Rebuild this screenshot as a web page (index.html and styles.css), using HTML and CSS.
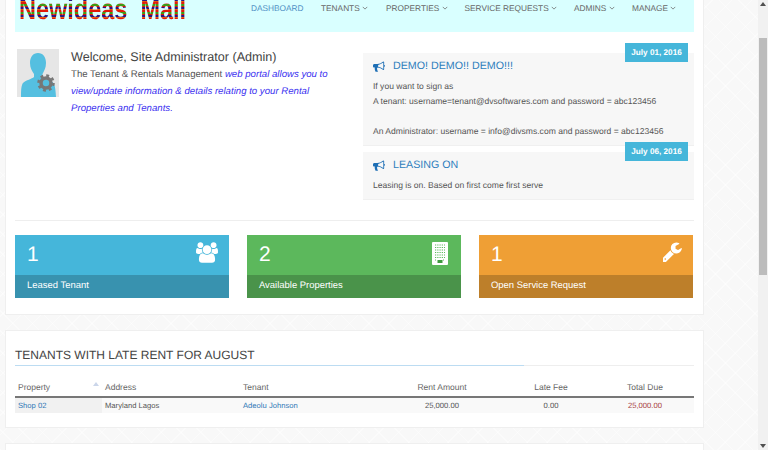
FILE: index.html
```html
<!DOCTYPE html>
<html lang="en">
<head>
<meta charset="utf-8">
<title>Newideas Mall</title>
<link rel="stylesheet" href="styles.css">
</head>
<body>
<svg class="defs" width="0" height="0" aria-hidden="true">
  <defs>
    <symbol id="bullhorn" viewBox="0 0 1792 1792"><path d="M1664 736q53 0 90.5 37.5t37.5 90.5-37.5 90.5-90.5 37.5v384q0 52-38 90t-90 38q-417-347-812-380-58 19-91 66t-31 100.5 40 92.5q-20 33-23 65.5t6 58 33.5 55 48 50 61.5 50.5q-29 58-111.5 83t-168.5 11.5-132-55.5q-7-23-29.5-87.5t-32-94.5-23-89-15-101 3.5-98.5 22-110.5h-122q-66 0-113-47t-47-113v-192q0-66 47-113t113-47h480q435 0 896-384 52 0 90 38t38 90v384zm-128 604v-954q-394 302-768 343v270q377 42 768 341z"/></symbol>
    <symbol id="chev" viewBox="0 0 8 5"><path d="M1 1l3 3 3-3" fill="none" stroke="currentColor" stroke-width="1"/></symbol>
  </defs>
</svg>
<div class="window">
  <main class="page">
    <section class="panel panel-top">
      <header class="topbar">
        <div class="logo">Newideas  Mall</div>
        <nav class="nav">
          <a class="nav-item nav-active nav-dash">DASHBOARD</a>
          <a class="nav-item nav-tenants">TENANTS <svg class="chev"><use href="#chev"/></svg></a>
          <a class="nav-item nav-props">PROPERTIES <svg class="chev"><use href="#chev"/></svg></a>
          <a class="nav-item nav-service">SERVICE REQUESTS <svg class="chev"><use href="#chev"/></svg></a>
          <a class="nav-item nav-admins">ADMINS <svg class="chev"><use href="#chev"/></svg></a>
          <a class="nav-item">MANAGE <svg class="chev"><use href="#chev"/></svg></a>
        </nav>
      </header>

      <div class="intro">
        <div class="welcome">
          <svg class="avatar" viewBox="0 0 42 48" aria-hidden="true">
            <rect width="42" height="48" fill="#e6e6e6"/>
            <path d="M21 4c5 0 8 4 8 10 0 5-2 8-3.500 11v3c2 2 7 3 10 5 2 2 3 5 3.500 15H4c0-8 .5-12 2-14 3-3 9-4 11-6v-3c-2-3-4-6-4-11 0-6 3-10 8-10z" fill="#55bfe0"/>
            <circle cx="29" cy="34" r="5" fill="none" stroke="#777" stroke-width="3.500"/>
            <circle cx="29" cy="34" r="7.500" fill="none" stroke="#777" stroke-width="2.500" stroke-dasharray="2.900 2.990"/>
          </svg>
          <div class="welcome-text">
            <h1 class="welcome-title">Welcome, Site Administrator (Admin)</h1>
            <p class="welcome-copy">The Tenant &amp; Rentals Management <em class="accent">web portal allows you to view/update information &amp; details relating to your Rental Properties and Tenants.</em></p>
          </div>
        </div>
        <div class="notices">
          <article class="notice">
            <span class="badge">July 01, 2016</span>
            <h2 class="notice-title"><svg class="horn"><use href="#bullhorn"/></svg>DEMO! DEMO!! DEMO!!!</h2>
            <p class="notice-text">If you want to sign as<br>A tenant: username=tenant@dvsoftwares.com and password = abc123456<br><br>An Administrator: username = info@divsms.com and password = abc123456</p>
          </article>
          <article class="notice">
            <span class="badge">July 06, 2016</span>
            <h2 class="notice-title"><svg class="horn"><use href="#bullhorn"/></svg>LEASING ON</h2>
            <p class="notice-text">Leasing is on. Based on first come first serve</p>
          </article>
        </div>
      </div>

      <hr class="rule">

      <div class="stats">
        <div class="stat stat-blue">
          <div class="stat-main"><span class="stat-num">1</span>
            <svg class="stat-icon icon-users" viewBox="0 0 1920 1792" fill="#fff"><path d="M593 896q-162 5-265 128h-134q-82 0-138-40.500t-56-118.500q0-353 124-353 6 0 43.500 21t97.500 42.500 119 21.500q67 0 133-23-5 37-5 66 0 139 81 256zm1071 637q0 120-73 189.500t-194 69.500h-874q-121 0-194-69.500t-73-189.500q0-53 3.500-103.500t14-109 26.500-108.500 43-97.500 62-81 85.500-53.500 111.500-20q10 0 43 21.500t73 48 107 48 135 21.500 135-21.500 107-48 73-48 43-21.500q61 0 111.500 20t85.500 53.500 62 81 43 97.500 26.500 108.500 14 109 3.500 103.500zm-1024-1277q0 106-75 181t-181 75-181-75-75-181 75-181 181-75 181 75 75 181zm704 384q0 159-112.500 271.500t-271.500 112.500-271.500-112.500-112.500-271.500 112.500-271.500 271.500-112.500 271.500 112.500 112.500 271.500zm576 225q0 78-56 118.500t-138 40.500h-134q-103-123-265-128 81-117 81-256 0-29-5-66 66 23 133 23 59 0 119-21.500t97.500-42.500 43.500-21q124 0 124 353zm-128-609q0 106-75 181t-181 75-181-75-75-181 75-181 181-75 181 75 75 181z"/></svg>
          </div>
          <div class="stat-foot">Leased Tenant</div>
        </div>
        <div class="stat stat-green">
          <div class="stat-main"><span class="stat-num">2</span>
            <svg class="stat-icon icon-building" viewBox="0 0 16 23">
              <rect width="16" height="23" rx="1" fill="#fff"/>
              <path d="M3 3h10M3 5.500h10M3 8h10M3 10.500h10M3 13h10M3 15.500h10" stroke="#5cb85c" stroke-width="1.100" stroke-dasharray="1.200 1.050"/>
              <path d="M3 18h2M11 18h2" stroke="#5cb85c" stroke-width="1" stroke-dasharray="1 1"/>
              <rect x="5.500" y="18" width="5" height="3" fill="#3f9a3f"/>
            </svg>
          </div>
          <div class="stat-foot">Available Properties</div>
        </div>
        <div class="stat stat-orange">
          <div class="stat-main"><span class="stat-num">1</span>
            <svg class="stat-icon icon-wrench" viewBox="200 130 1540 1540" fill="#fff"><path d="M448 1472q0-26-19-45t-45-19-45 19-19 45 19 45 45 19 45-19 19-45zm644-420l-682 682q-37 37-90 37-52 0-91-37l-106-108q-38-36-38-90 0-53 38-91l681-681q39 98 114.500 173.500t173.500 114.500zm634-435q0 39-23 106-47 134-164.500 217.500t-258.500 83.500q-185 0-316.500-131.500t-131.500-316.500 131.500-316.500 316.500-131.500q58 0 121.500 16.500t107.500 46.500q16 11 16 28t-16 28l-293 169v224l193 107q5-3 79-48.500t135.500-81 70.500-35.500q15 0 23.500 10t8.500 25z"/></svg>
          </div>
          <div class="stat-foot">Open Service Request</div>
        </div>
      </div>
    </section>

    <section class="panel panel-late">
      <h2 class="section-title">TENANTS WITH LATE RENT FOR AUGUST</h2>
      <table class="late-table">
        <colgroup><col class="c-prop"><col class="c-addr"><col class="c-tenant"><col class="c-rent"><col class="c-fee"><col class="c-due"></colgroup>
        <thead>
          <tr><th class="sorted">Property<span class="sort-arrow"></span></th><th>Address</th><th>Tenant</th><th class="num">Rent Amount</th><th class="num">Late Fee</th><th class="num">Total Due</th></tr>
        </thead>
        <tbody>
          <tr><td class="cell-sorted"><a class="link">Shop 02</a></td><td>Maryland Lagos</td><td><a class="link">Adeolu Johnson</a></td><td class="num">25,000.00</td><td class="num">0.00</td><td class="num due">25,000.00</td></tr>
        </tbody>
      </table>
    </section>

    <section class="panel panel-next"></section>
  </main>
  <aside class="scrollbar" aria-hidden="true">
    <span class="arrow arrow-up"></span>
    <span class="thumb"></span>
    <span class="arrow arrow-down"></span>
  </aside>
</div>
</body>
</html>
```

FILE: styles.css
```css
* { box-sizing: border-box; }
html, body { margin: 0; height: 450px; overflow: hidden; }
body {
  font-family: "Liberation Sans", Arial, sans-serif;
  color: #555;
  background-color: #f8f8f8;
  text-rendering: geometricPrecision;
}
.defs { display: block; height: 0; }
.window { display: flex; height: 450px; overflow: hidden; }
.page {
  width: 758px;
  flex: none;
  padding: 0 54px 0 5px;
  display: flex;
  flex-direction: column;
  gap: 15px;
  background-color: #f8f8f8;
  background-image:
    repeating-linear-gradient(45deg, rgba(255,255,255,.45) 0 1px, transparent 1px 14px),
    repeating-linear-gradient(-45deg, rgba(255,255,255,.45) 0 1px, transparent 1px 14px);
}
.panel {
  background: #fff;
  border: 1px solid #efefef;
  border-top: 0;
  padding: 0 9px;
  flex: none;
}
.panel-top { height: 315px; }
.panel-late { height: 98px; border-top: 1px solid #efefef; }
.panel-next { height: 40px; border-top: 1px solid #efefef; }

.topbar {
  height: 32px;
  background: #d9ffff;
  display: flex;
  align-items: flex-start;
  overflow: hidden;
}
.logo {
  margin: -6px 0 0 3.500px;
  width: 232.500px;
  flex: none;
  white-space: pre;
  font-size: 29px;
  line-height: 32px;
  font-weight: 700;
  color: transparent;
  background-image: repeating-linear-gradient(180deg, #e01a08 0 2px, #3f9a14 2px 4px, #d81408 4px 5.500px, #2c1480 5.500px 7px, #e8590a 7px 8px);
  -webkit-background-clip: text;
  background-clip: text;
  height: 30px;
  transform: scaleX(.81);
  transform-origin: left center;
}
.nav { display: flex; font-size: 8.300px; line-height: 16px; color: #666; }
.nav-item { display: block; white-space: nowrap; }
.nav-active { color: #4f8fc4; }
.nav-dash { width: 70px; }
.nav-tenants { width: 65px; }
.nav-props { width: 78.500px; }
.nav-service { width: 109.500px; }
.nav-admins { width: 58px; }
.chev { width: 6px; height: 4px; vertical-align: 1px; }

.intro { display: flex; height: 168px; }
.welcome { width: 348px; flex: none; display: flex; padding: 17px 0 0 2px; }
.avatar { width: 42px; height: 48px; flex: none; }
.welcome-text { margin-left: 12px; }
.welcome-title { margin: 0; font-size: 12.600px; line-height: 16px; font-weight: 400; color: #444; }
.welcome-copy { margin: 1px 0 0; font-size: 9.630px; line-height: 17px; width: 262px; }
.accent { color: #3a2ff0; }

.notices { width: 331px; flex: none; padding-top: 21px; display: flex; flex-direction: column; gap: 6px; }
.notice { position: relative; background: #f7f7f7; border-bottom: 1px solid #f0f0f0; padding: 5px 10px 0; }
.notice:first-child { height: 93px; }
.notice:last-child { height: 48px; }
.badge {
  position: absolute;
  top: -10px;
  right: 6px;
  width: 63px;
  height: 19px;
  background: #45b6da;
  color: #fff;
  font-size: 8.200px;
  font-weight: 700;
  line-height: 19px;
  text-align: center;
}
.notice-title { margin: 0; display: flex; align-items: center; font-size: 10.700px; line-height: 16px; font-weight: 400; color: #2e7ebd; }
.horn { width: 12px; height: 12px; margin-right: 8px; fill: #1e6fb5; flex: none; }
.notice-text { margin: 5px 0 0; font-size: 8.550px; line-height: 15px; white-space: nowrap; }

.rule { margin: 20px 0 14px; border: 0; border-top: 1px solid #eee; height: 1px; }

.stats { display: flex; gap: 18px; }
.stat { width: 214px; height: 63px; color: #fff; }
.stat-main { height: 40px; display: flex; justify-content: space-between; padding: 7px 0 0 12px; }
.stat-num { font-size: 21px; line-height: 25px; }
.stat-foot { height: 23px; padding-left: 12px; font-size: 9.450px; line-height: 22px; }
.stat-blue .stat-main { background: #45b6da; }
.stat-blue .stat-foot { background: #3892af; }
.stat-green .stat-main { background: #5cb85c; }
.stat-green .stat-foot { background: #4a934a; }
.stat-orange .stat-main { background: #ef9f35; }
.stat-orange .stat-foot { background: #bd7f2a; }
.stat-icon { flex: none; }
.icon-users { width: 22px; height: 21px; margin: 0 11px 0 0; }
.icon-building { width: 16px; height: 23px; margin: 0 13px 0 0; }
.icon-wrench { width: 19px; height: 20px; margin: 0 11px 0 0; }

.section-title {
  margin: 16px 0 0;
  height: 19px;
  font-size: 12px;
  line-height: 16px;
  font-weight: 400;
  color: #444;
  background:
    linear-gradient(#bcdcf2, #bcdcf2) left bottom / 509px 1px no-repeat,
    linear-gradient(#eee, #eee) left bottom / 100% 1px no-repeat;
}
.late-table { width: 679px; margin-top: 11px; border-collapse: collapse; table-layout: fixed; font-size: 7.650px; }
.c-prop { width: 87px; }
.c-addr { width: 138px; }
.c-tenant { width: 138px; }
.c-rent { width: 128px; }
.c-fee { width: 90px; }
.c-due { width: 98px; }
.late-table th { font-weight: 400; font-size: 8.500px; text-align: left; padding: 0 3px; height: 20px; border-bottom: 2px solid #777; color: #666; }
.late-table th.num { text-align: center; }
.late-table td { padding: 0 3px; height: 16px; background: #f9f9f9; color: #555; }
.late-table .num { text-align: center; }
.late-table .cell-sorted { background: #f1f1f1; }
.sorted { position: relative; }
.sort-arrow {
  position: absolute;
  right: 3px;
  top: 5px;
  border: 3px solid transparent;
  border-top: 0;
  border-bottom: 4px solid #cbd6ea;
}
.link { color: #337ab7; }
.late-table .due { color: #a94442; }

.scrollbar { width: 10px; flex: none; background: #f1f1f1; position: relative; padding: 38px 1px 0; }
.thumb { display: block; height: 237px; background: #bcbcbc; }
.arrow { position: absolute; left: 2px; border: 3px solid transparent; }
.arrow-up { top: 2px; border-top: 0; border-bottom: 4px solid #505050; }
.arrow-down { bottom: 2px; border-bottom: 0; border-top: 4px solid #505050; }
```
